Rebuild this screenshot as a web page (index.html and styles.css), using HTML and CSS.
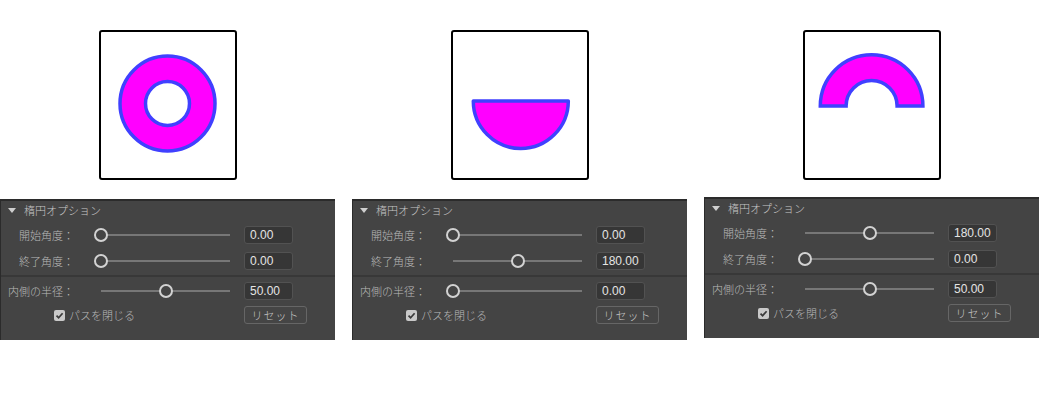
FILE: index.html
```html
<!DOCTYPE html>
<html lang="ja">
<head>
<meta charset="UTF-8">
<meta name="viewport" content="width=device-width, initial-scale=1.0">
<title>楕円オプション</title>
<link rel="stylesheet" href="styles.css">
</head>
<body>
<div class="board">

    <!-- full ring -->
    <div class="col">
        <div class="canvas">
            <svg width="134" height="146" viewBox="0 0 134 146">
                <path class="shape" fill-rule="evenodd" d="M19 71.5 a47.5 47.5 0 1 0 95 0 a47.5 47.5 0 1 0 -95 0 Z M44.5 71.5 a22 22 0 1 0 44 0 a22 22 0 1 0 -44 0 Z"/>
            </svg>
        </div>
        <div class="panel">
            <div class="panel-head"><span class="caret"></span>楕円オプション</div>
            <div class="row">
                <span class="label">開始角度：</span>
                <div class="slider"><span class="track"></span><span class="thumb" style="left: 0%"></span></div>
                <input class="field" type="text" value="0.00">
            </div>
            <div class="row">
                <span class="label">終了角度：</span>
                <div class="slider"><span class="track"></span><span class="thumb" style="left: 0%"></span></div>
                <input class="field" type="text" value="0.00">
            </div>
            <div class="sep"></div>
            <div class="row">
                <span class="label">内側の半径：</span>
                <div class="slider"><span class="track"></span><span class="thumb" style="left: 50%"></span></div>
                <input class="field" type="text" value="50.00">
            </div>
            <div class="row last">
                <label class="toggle">
                    <span class="box"><svg width="11" height="11" viewBox="0 0 11 11"><path d="M2.5 5.6 L4.6 7.7 L8.6 3.2"/></svg></span>
                    パスを閉じる
                </label>
                <button class="reset">リセット</button>
            </div>
        </div>
    </div>

    <!-- lower half disc -->
    <div class="col">
        <div class="canvas">
            <svg width="134" height="146" viewBox="0 0 134 146">
                <path class="shape round" d="M20.3 69 A47.5 47.5 0 0 0 115.3 69 Z"/>
            </svg>
        </div>
        <div class="panel">
            <div class="panel-head"><span class="caret"></span>楕円オプション</div>
            <div class="row">
                <span class="label">開始角度：</span>
                <div class="slider"><span class="track"></span><span class="thumb" style="left: 0%"></span></div>
                <input class="field" type="text" value="0.00">
            </div>
            <div class="row">
                <span class="label">終了角度：</span>
                <div class="slider"><span class="track"></span><span class="thumb" style="left: 50%"></span></div>
                <input class="field" type="text" value="180.00">
            </div>
            <div class="sep"></div>
            <div class="row">
                <span class="label">内側の半径：</span>
                <div class="slider"><span class="track"></span><span class="thumb" style="left: 0%"></span></div>
                <input class="field" type="text" value="0.00">
            </div>
            <div class="row last">
                <label class="toggle">
                    <span class="box"><svg width="11" height="11" viewBox="0 0 11 11"><path d="M2.5 5.6 L4.6 7.7 L8.6 3.2"/></svg></span>
                    パスを閉じる
                </label>
                <button class="reset">リセット</button>
            </div>
        </div>
    </div>

    <!-- upper half ring -->
    <div class="col lifted">
        <div class="canvas">
            <svg width="134" height="146" viewBox="0 0 134 146">
                <path class="shape" d="M15.3 74 A51.3 51.3 0 0 1 117.9 74 L92.1 74 A25.5 25.5 0 0 0 41.1 74 Z"/>
            </svg>
        </div>
        <div class="panel">
            <div class="panel-head"><span class="caret"></span>楕円オプション</div>
            <div class="row">
                <span class="label">開始角度：</span>
                <div class="slider"><span class="track"></span><span class="thumb" style="left: 50%"></span></div>
                <input class="field" type="text" value="180.00">
            </div>
            <div class="row">
                <span class="label">終了角度：</span>
                <div class="slider"><span class="track"></span><span class="thumb" style="left: 0%"></span></div>
                <input class="field" type="text" value="0.00">
            </div>
            <div class="sep"></div>
            <div class="row">
                <span class="label">内側の半径：</span>
                <div class="slider"><span class="track"></span><span class="thumb" style="left: 50%"></span></div>
                <input class="field" type="text" value="50.00">
            </div>
            <div class="row last">
                <label class="toggle">
                    <span class="box"><svg width="11" height="11" viewBox="0 0 11 11"><path d="M2.5 5.6 L4.6 7.7 L8.6 3.2"/></svg></span>
                    パスを閉じる
                </label>
                <button class="reset">リセット</button>
            </div>
        </div>
    </div>

</div>
</body>
</html>
```

FILE: styles.css
```css
body {
    margin: 0;
    background: #fff;
    font-family: "Liberation Sans", "Noto Sans CJK JP", sans-serif;
}

.board {
    display: grid;
    grid-template-columns: repeat(3, 335px);
    column-gap: 17px;
}

.col {
    display: flex;
    flex-direction: column;
    align-items: center;
}

/* drawing area */
.canvas {
    margin-top: 30px;
    width: 134px;
    height: 146px;
    border: 2px solid #000;
    border-radius: 3px;
    background: #fff;
}
.canvas svg {
    display: block;
}
.shape {
    fill: #ff00ff;
    stroke: #4040ff;
    stroke-width: 3.5;
}
.shape.round {
    stroke-linejoin: round;
}

/* options panel */
.panel {
    align-self: stretch;
    margin-top: 19px;
    padding-bottom: 16px;
    background: #444;
    border-top: 2px solid #2b2b2b;
    border-left: 1px solid #2b2b2b;
    color: #b9b9b9;
    font-size: 11px;
    font-weight: 300;
}
.col.lifted .panel {
    margin-top: 17px;
}

.panel-head {
    display: flex;
    align-items: center;
    height: 18px;
    padding-left: 7px;
    margin-bottom: 7px;
    color: #c6c6c6;
}
.caret {
    width: 0;
    height: 0;
    border-left: 4px solid transparent;
    border-right: 4px solid transparent;
    border-top: 5px solid #cfcfcf;
    margin-right: 8px;
}

.row {
    display: flex;
    align-items: center;
    height: 18px;
    margin-bottom: 8px;
}
.row.last {
    margin-top: -2px;
    margin-bottom: 0;
}
.label {
    width: 73px;
    text-align: right;
    white-space: nowrap;
}

.slider {
    position: relative;
    width: 129px;
    height: 14px;
    margin-left: 27px;
    margin-right: 14px;
}
.track {
    position: absolute;
    left: 0;
    right: 0;
    top: 6px;
    height: 2px;
    background: #777;
}
.thumb {
    position: absolute;
    top: 0;
    width: 14px;
    height: 14px;
    box-sizing: border-box;
    border: 2px solid #d2d2d2;
    border-radius: 50%;
    background: #444;
    transform: translateX(-50%);
}

.field {
    width: 49px;
    height: 18px;
    box-sizing: border-box;
    margin: 0;
    padding: 0 0 0 5px;
    background: #363636;
    border: 1px solid #525252;
    border-radius: 3px;
    color: #e4e4e4;
    font-family: "Liberation Sans", sans-serif;
    font-size: 12px;
    outline: none;
}

.sep {
    height: 2px;
    background: #383838;
    margin: -3px 0 5px;
}

.toggle {
    display: flex;
    align-items: center;
    gap: 4px;
    width: 243px;
    box-sizing: border-box;
    padding-left: 53px;
}
.box {
    width: 11px;
    height: 11px;
    border-radius: 2px;
    background: #c9c9c9;
}
.box svg {
    display: block;
}
.box path {
    fill: none;
    stroke: #3a3a3a;
    stroke-width: 1.7;
}

.reset {
    width: 63px;
    height: 18px;
    padding: 0;
    background: #454545;
    border: 1px solid #666;
    border-radius: 3px;
    color: #c6c6c6;
    font-family: "Liberation Sans", "Noto Sans CJK JP", sans-serif;
    font-size: 11px;
    font-weight: 300;
    letter-spacing: 1px;
}
```
